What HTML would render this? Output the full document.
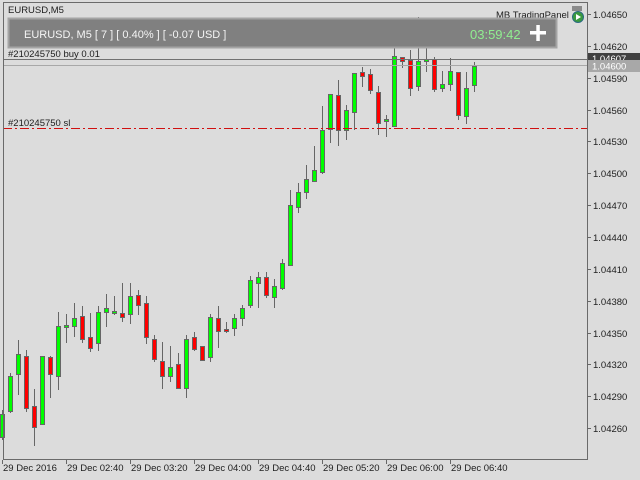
<!DOCTYPE html>
<html><head><meta charset="utf-8"><style>
html,body{margin:0;padding:0;background:#dcdcdc;width:640px;height:480px;overflow:hidden}
svg{position:absolute;left:0;top:0}
svg text{font-family:"Liberation Sans",sans-serif;font-size:9.5px;fill:#202020}
</style></head><body>
<svg id="s" width="640" height="480" xmlns="http://www.w3.org/2000/svg">
<rect x="0" y="0" width="640" height="480" fill="#dcdcdc"/>
<g id="c"></g>
<line x1="3" y1="59.5" x2="587" y2="59.5" stroke="#707070"/>
<line x1="3" y1="65.5" x2="587" y2="65.5" stroke="#a8a8a8"/>
<line x1="3" y1="128.5" x2="587" y2="128.5" stroke="#d01010" stroke-dasharray="9,3,2,3"/>
<rect x="3.5" y="2.5" width="584" height="457" fill="none" stroke="#6a6a6a"/>
<g id="ax"></g>
<text x="8" y="13">EURUSD,M5</text>
<text x="8" y="57">#210245750 buy 0.01</text>
<text x="8" y="126">#210245750 sl</text>
<text x="496" y="18">MB TradingPanel</text>
<circle cx="578" cy="17" r="5.5" fill="#3a9a40" stroke="#2a6a80"/>
<path d="M576 14 L581 17 L576 20 Z" fill="#fff"/>
<rect x="572" y="6" width="10" height="5" fill="#8a8a8a"/>
<rect x="8.5" y="18.5" width="548" height="29" fill="#808080" stroke="#a4a4a4" stroke-width="2"/>
<text x="24" y="38" style="fill:#f4f4f4;font-size:11px">EURUSD, M5 [ 7 ] [ 0.40% ] [ -0.07 USD ]</text>
<text x="470" y="39" style="fill:#90ee90;font-size:13px">03:59:42</text>
<rect x="530" y="31" width="16" height="3.5" fill="#fff"/>
<rect x="536.3" y="25" width="3.5" height="16" fill="#fff"/>
<rect x="588" y="53" width="52" height="11" fill="#404040"/>
<text x="592" y="62" style="fill:#fff">1.04607</text>
<rect x="588" y="60" width="52" height="12" fill="#a8a8a8"/>
<text x="592" y="69.5" style="fill:#fff">1.04600</text>
</svg>
<script>
var C=[[2,414,437,410,440,1],[10,376,411,373,413,1],[18,354,374,340,395,1],[26,356,408,350,412,0],[34,406,427,389,446,0],[42,356,424,356,424,1],[50,357,374,356,398,0],[58,326,376,312,390,1],[66,325,327,314,343,1],[74,318,326,303,337,1],[82,316,339,306,343,0],[90,337,348,313,352,0],[98,312,343,306,351,1],[106,308,312,294,327,1],[114,311,313,296,315,1],[122,313,317,283,322,0],[130,296,314,283,324,1],[138,295,305,290,315,0],[146,303,337,296,344,0],[154,339,359,335,362,0],[162,361,376,342,389,0],[170,367,376,346,382,1],[178,364,388,353,388,0],[186,339,388,335,398,1],[194,337,349,332,351,0],[202,346,360,346,361,0],[210,317,357,314,362,1],[218,318,331,306,348,0],[226,329,331,322,333,0],[234,318,328,314,336,1],[242,308,318,305,326,1],[250,280,305,276,308,1],[258,277,283,272,308,1],[266,277,295,272,298,0],[274,286,297,279,308,1],[282,263,288,259,290,1],[290,205,265,190,266,1],[298,192,207,183,213,1],[306,179,192,165,199,1],[314,170,181,146,182,1],[322,130,172,106,174,1],[330,94,129,94,143,1],[338,95,130,80,146,0],[346,110,130,105,140,1],[354,73,112,73,130,1],[362,72,76,67,87,0],[370,74,90,69,94,0],[378,92,123,86,135,0],[386,119,121,115,137,1],[394,56,126,46,127,1],[402,57,61,57,68,0],[410,60,88,50,96,0],[418,61,86,17,91,1],[426,59,61,46,72,1],[434,59,89,57,92,0],[442,84,88,71,92,1],[450,71,84,58,91,1],[458,72,115,72,120,0],[466,88,116,72,124,1],[474,66,85,62,92,1]];
var h='';C.forEach(function(c){var x=c[0];h+='<line x1="'+(x+.5)+'" y1="'+c[3]+'" x2="'+(x+.5)+'" y2="'+c[4]+'" stroke="#666"/>';
var bh=Math.max(c[2]-c[1],1);h+='<rect x="'+(x-1.5)+'" y="'+(c[1]+.5)+'" width="4" height="'+bh+'" fill="'+(c[5]?'#00ff00':'#ff0000')+'" stroke="#666"/>';});
document.getElementById('c').innerHTML=h;
var a='',p=['1.04650','1.04620','1.04590','1.04560','1.04530','1.04500','1.04470','1.04440','1.04410','1.04380','1.04350','1.04320','1.04290','1.04260'];
p.forEach(function(t,i){var y=Math.round(14+i*31.85);a+='<line x1="587" y1="'+(y+.5)+'" x2="591" y2="'+(y+.5)+'" stroke="#666"/><text x="593" y="'+(y+4)+'">'+t+'</text>';});
var tl=['29 Dec 2016','29 Dec 02:40','29 Dec 03:20','29 Dec 04:00','29 Dec 04:40','29 Dec 05:20','29 Dec 06:00','29 Dec 06:40'];
tl.forEach(function(t,i){var x=2+i*64;a+='<line x1="'+(x+.5)+'" y1="460" x2="'+(x+.5)+'" y2="464" stroke="#666"/><text x="'+(x+1)+'" y="471">'+t+'</text>';});
document.getElementById('ax').innerHTML=a;
</script>
</body></html>
